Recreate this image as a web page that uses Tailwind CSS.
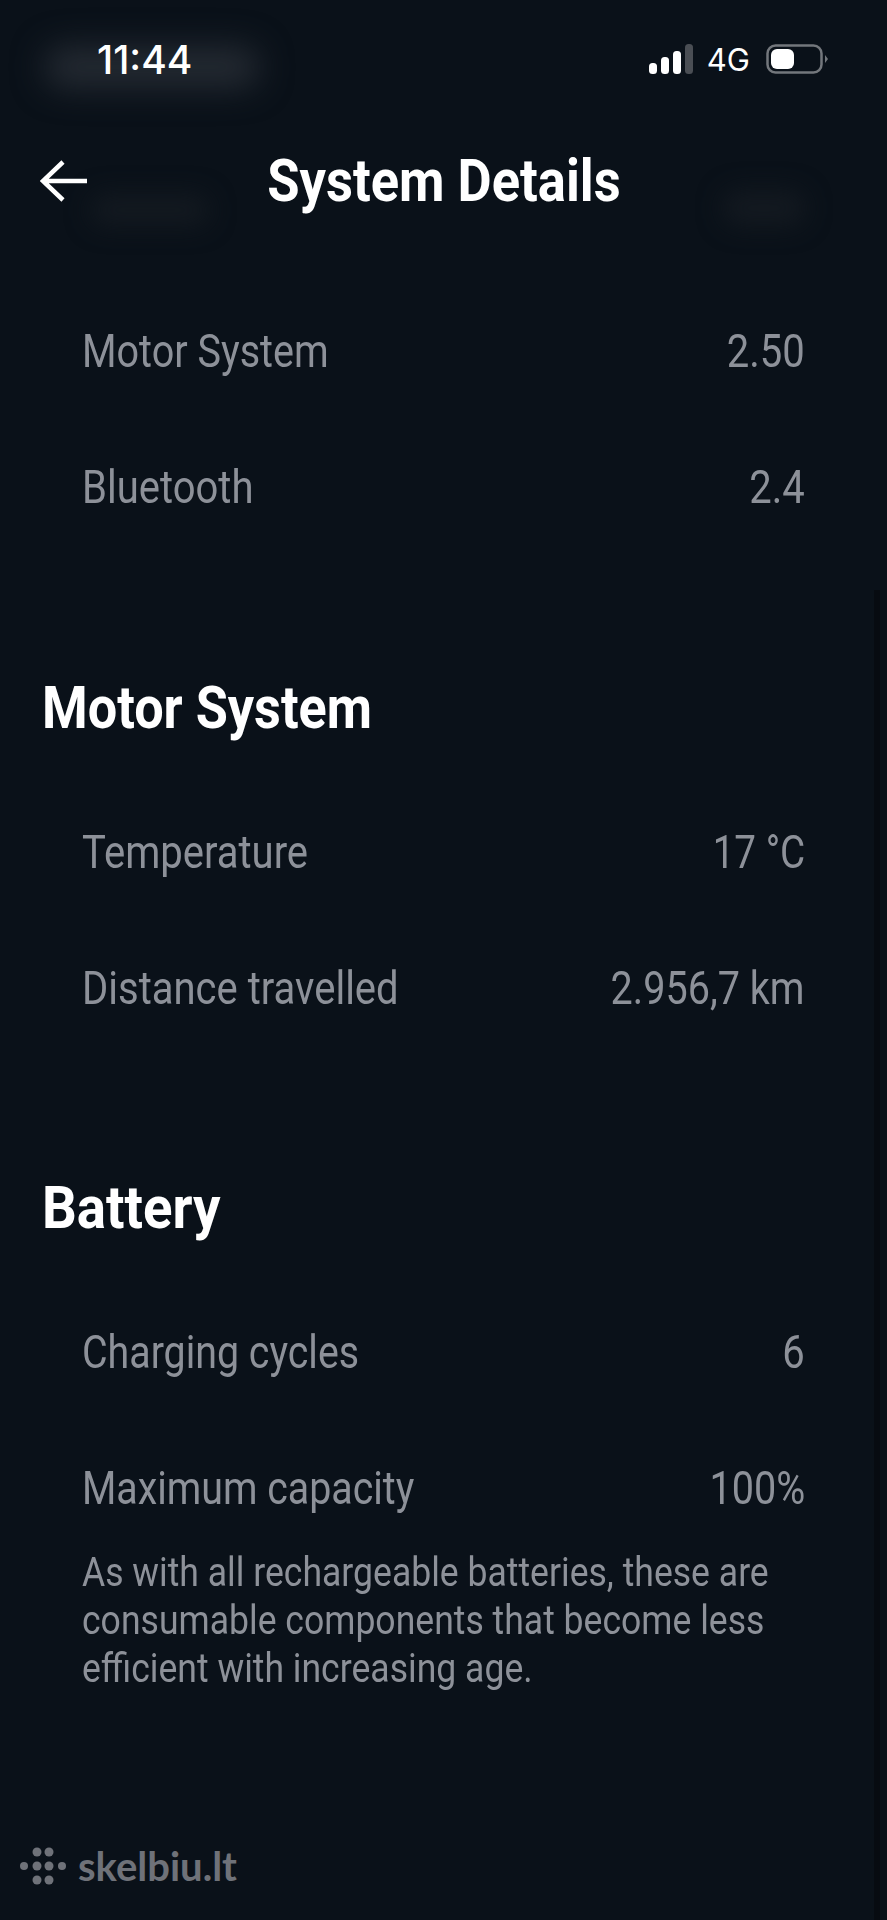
<!DOCTYPE html>
<html>
<head>
    <title>System Details</title>
    <script src="https://cdn.jsdelivr.net/npm/@tailwindcss/browser@4"></script>
</head>
<body class="bg-[#0a1119]">
<div class="relative h-[1920px] w-[887px] overflow-hidden bg-[#0a1119] font-['Roboto',sans-serif] text-white">
    <!-- smudges behind the status bar and header -->
    <div class="absolute left-[44px] top-[46px] h-[42px] w-[216px] rounded-full bg-[#242a32] blur-[16px]"></div>
    <div class="absolute left-[90px] top-[194px] h-[32px] w-[120px] rounded-full bg-[#131920] blur-[12px]"></div>
    <div class="absolute left-[722px] top-[190px] h-[36px] w-[84px] rounded-full bg-[#131920] blur-[12px]"></div>
    <!-- scrollbar track -->
    <div class="absolute right-[7px] top-[590px] h-[1330px] w-[6px] bg-[#070b11]"></div>

    <!-- status bar -->
    <div class="relative flex h-[118px] items-center justify-between pl-[97px] pr-[59px]">
        <span class="font-['Inter',sans-serif] text-[39px] font-medium leading-none">11:44</span>
        <div class="flex items-center gap-[14px]">
            <svg width="44" height="30" viewBox="0 0 44 30">
                <rect x="0" y="19" width="8" height="11" rx="3.5" fill="#fff"/>
                <rect x="12" y="13" width="8" height="17" rx="3.5" fill="#fff"/>
                <rect x="24" y="7" width="8" height="23" rx="3.5" fill="#fff"/>
                <rect x="36" y="0" width="8" height="30" rx="3.5" fill="#4a4e54"/>
            </svg>
            <span class="font-['Inter',sans-serif] text-[31px] leading-none">4G</span>
            <svg class="ml-[2px]" width="62" height="30" viewBox="0 0 62 30">
                <rect x="1.5" y="1.5" width="54" height="27" rx="8" fill="none" stroke="#73777c" stroke-width="2.5"/>
                <rect x="5" y="5" width="23" height="20" rx="6" fill="#fff"/>
                <path d="M59 11 L62 15 L59 19 Z" fill="#73777c"/>
            </svg>
        </div>
    </div>

    <!-- header -->
    <header class="relative flex h-[126px] items-center justify-center">
        <svg class="absolute left-[40px] top-[41px]" width="48" height="44" viewBox="0 0 48 44" fill="none" stroke="#fff" stroke-width="4.5">
            <path d="M23 3 L3 22 L23 41 M3 22 H47"/>
        </svg>
        <h1 class="scale-x-[0.875] text-[60px] font-bold leading-none">System Details</h1>
    </header>

    <section class="flex flex-col px-[82px] pt-[39px] text-[46px] text-[#8d9199]">
        <div class="flex h-[136px] items-center justify-between"><span class="origin-left scale-x-[0.86]">Motor System</span><span class="origin-right scale-x-[0.87]">2.50</span></div>
        <div class="flex h-[136px] items-center justify-between"><span class="origin-left scale-x-[0.87]">Bluetooth</span><span class="origin-right scale-x-[0.87]">2.4</span></div>
    </section>

    <section class="flex flex-col pt-[113px]">
        <h2 class="origin-left translate-x-[42px] scale-x-[0.87] text-[60px] font-bold leading-[80px]">Motor System</h2>
        <div class="flex flex-col px-[82px] pt-[36px] text-[46px] text-[#8d9199]">
            <div class="flex h-[136px] items-center justify-between"><span class="origin-left scale-x-[0.87]">Temperature</span><span class="origin-right scale-x-[0.84]">17 °C</span></div>
            <div class="flex h-[136px] items-center justify-between"><span class="origin-left scale-x-[0.87]">Distance travelled</span><span class="origin-right scale-x-[0.86]">2.956,7 km</span></div>
        </div>
    </section>

    <section class="flex flex-col pt-[112px]">
        <h2 class="origin-left translate-x-[42px] scale-x-[0.91] text-[60px] font-bold leading-[80px]">Battery</h2>
        <div class="flex flex-col px-[82px] pt-[36px] text-[46px] text-[#8d9199]">
            <div class="flex h-[136px] items-center justify-between"><span class="origin-left scale-x-[0.855]">Charging cycles</span><span class="origin-right scale-x-[0.87]">6</span></div>
            <div class="flex h-[136px] items-center justify-between"><span class="origin-left scale-x-[0.855]">Maximum capacity</span><span class="origin-right scale-x-[0.86]">100%</span></div>
            <p class="-mt-[7px] w-[790px] origin-left scale-x-[0.889] text-[40px] leading-[48px]">As with all rechargeable batteries, these are consumable components that become less efficient with increasing age.</p>
        </div>
    </section>

    <!-- watermark -->
    <div class="absolute bottom-[34px] left-[20px] flex items-center gap-[12px] text-[#6f7279]">
        <svg width="46" height="38" viewBox="0 0 46 38" fill="#6f7279">
            <circle cx="17" cy="5" r="4.5"/><circle cx="29" cy="5" r="4.5"/>
            <circle cx="4" cy="19" r="4"/><circle cx="17" cy="19" r="4.5"/><circle cx="29" cy="19" r="4.5"/><circle cx="42" cy="19" r="4"/>
            <circle cx="17" cy="33" r="4.5"/><circle cx="29" cy="33" r="4.5"/>
        </svg>
        <span class="font-['Lato',sans-serif] text-[40px] font-bold leading-none">skelbiu.lt</span>
    </div>
</div>
</body>
</html>
